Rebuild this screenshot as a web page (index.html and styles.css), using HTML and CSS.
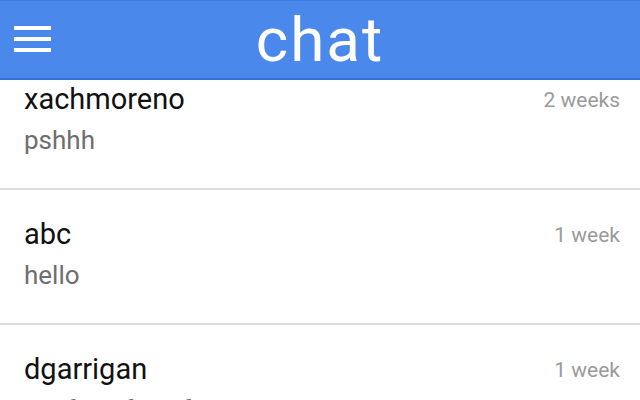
FILE: index.html
```html
<!DOCTYPE html>
<html>
<head>
<meta charset="utf-8">
<link rel="stylesheet" href="styles.css">
</head>
<body>
<header class="appbar">
  <div class="menu" aria-label="menu">
    <span></span><span></span><span></span>
  </div>
  <h1 class="title">chat</h1>
</header>
<ul class="threads">
  <li class="thread">
    <div class="top"><span class="name">xachmoreno</span><span class="time">2 weeks</span></div>
    <div class="msg">pshhh</div>
  </li>
  <li class="thread">
    <div class="top"><span class="name">abc</span><span class="time">1 week</span></div>
    <div class="msg">hello</div>
  </li>
  <li class="thread">
    <div class="top"><span class="name">dgarrigan</span><span class="time">1 week</span></div>
    <div class="msg">asdf asdf asdf</div>
  </li>
</ul>
</body>
</html>
```
FILE: styles.css
```css
html, body {
  margin: 0;
  padding: 0;
  background: #ffffff;
  font-family: Roboto, "Liberation Sans", sans-serif;
  overflow: hidden;
  height: 400px;
}
.appbar {
  position: fixed;
  top: 0;
  left: 0;
  right: 0;
  height: 77px;
  background: #4a88ec;
  border-top: 1px solid #3d7ce4;
  border-bottom: 2px solid #2f6fde;
  display: flex;
  align-items: center;
  justify-content: center;
  z-index: 2;
}
.menu {
  position: absolute;
  left: 14px;
  top: 25px;
  width: 37px;
  display: flex;
  flex-direction: column;
  gap: 7px;
}
.menu span {
  display: block;
  height: 4px;
  background: #ffffff;
}
.title {
  margin: 0;
  color: #ffffff;
  font-weight: 400;
  font-size: 62px;
  letter-spacing: 2px;
  line-height: 1;
}
.threads {
  list-style: none;
  margin: 55px 0 0 0;
  padding: 0;
}
.thread {
  height: 133px;
  border-bottom: 2px solid #dddddd;
  padding: 0 20px 0 24px;
  box-sizing: content-box;
}
.top {
  display: flex;
  justify-content: space-between;
  align-items: baseline;
  padding-top: 28px;
}
.name {
  font-size: 29px;
  color: #111111;
  line-height: 32px;
}
.time {
  font-size: 21px;
  color: #9a9a9a;
  position: relative;
  top: -2px;
}
.msg {
  font-size: 26px;
  color: #6e6e6e;
  margin-top: 10px;
  line-height: 30px;
}
```
